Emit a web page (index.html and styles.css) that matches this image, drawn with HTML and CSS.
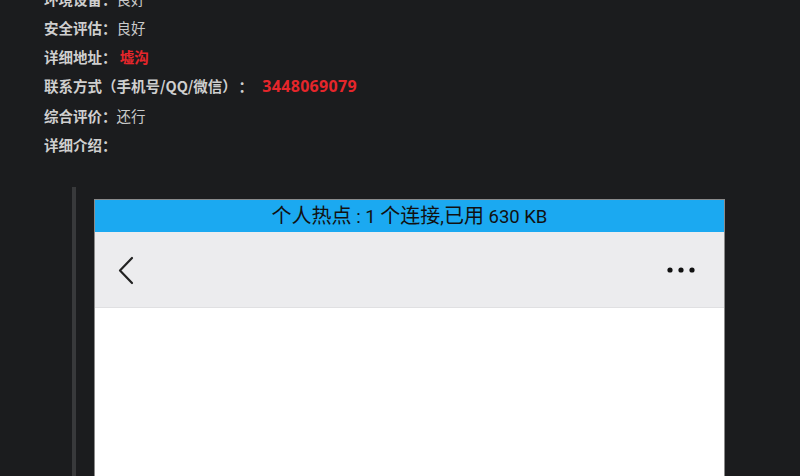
FILE: index.html
```html
<!DOCTYPE html>
<html lang="zh-CN">
<head>
    <meta charset="UTF-8">
    <meta name="viewport" content="width=device-width, initial-scale=1.0">
    <title>详细信息</title>
    <link rel="stylesheet" href="styles.css">
</head>
<body>
    <div class="post">
        <div class="info">
            <p><b>环境设备：</b>良好</p>
            <p><b>安全评估：</b>良好</p>
            <p><b>详细地址：</b> <span class="hot">墟沟</span></p>
            <p><b>联系方式（手机号/QQ/微信）<span class="colon">：</span></b> <span class="hot num">3448069079</span></p>
            <p><b>综合评价：</b>还行</p>
            <p><b>详细介绍：</b></p>
        </div>

        <blockquote class="quote">
            <div class="shot">
                <div class="status">个人热点<span class="lat"> : 1 </span>个连接<span class="lat">,</span>已用<span class="lat"> 630 KB</span></div>
                <div class="nav">
                    <svg class="back" width="18" height="30" viewBox="0 0 18 30">
                        <path d="M15 3 L3 15.5 L15 28" fill="none" stroke="#222" stroke-width="2.2" stroke-linecap="round" stroke-linejoin="round"/>
                    </svg>
                    <svg class="more" width="28" height="8" viewBox="0 0 28 8">
                        <circle cx="3" cy="4" r="2.6" fill="#111"/>
                        <circle cx="14" cy="4" r="2.6" fill="#111"/>
                        <circle cx="25" cy="4" r="2.6" fill="#111"/>
                    </svg>
                </div>
                <div class="page"></div>
            </div>
        </blockquote>
    </div>
</body>
</html>
```

FILE: styles.css
```css
body {
    margin: 0;
    background-color: #1b1c1e;
    font-family: "Noto Sans CJK SC", "Noto Sans", sans-serif;
    color: #c9c9c9;
    overflow: hidden;
}
.post {
    margin-top: -16px;
    padding-left: 44px;
}
.info p {
    margin: 0;
    font-size: 14.5px;
    line-height: 29px;
}
.info b {
    font-weight: bold;
    color: #cfcfcf;
}
.colon {
    margin: 0 6px 0 9px;
}
.hot {
    color: #e5262b;
    font-weight: bold;
}
.num {
    font-family: "Noto Sans", sans-serif;
    font-size: 16px;
    letter-spacing: 0.3px;
}
.quote {
    margin: 28px 0 0 28px;
    padding: 12px 0 0 18px;
    border-left: 4px solid #38393b;
}
.shot {
    width: 629px;
    border: 1px solid #8a8a8a;
    border-bottom: none;
    background: #fff;
}
.status {
    height: 32px;
    background-color: #1ba9f1;
    color: #111;
    font-size: 20px;
    line-height: 30px;
    text-align: center;
}
.status .lat {
    font-family: Roboto, sans-serif;
    font-size: 18.5px;
}
.nav {
    height: 75px;
    background-color: #ececee;
    border-bottom: 1px solid #e0e0e2;
    display: flex;
    align-items: center;
    justify-content: space-between;
    padding: 0 29px 0 22px;
}
.back {
    margin-top: 1px;
}
.more {
    margin-top: 1px;
}
.page {
    height: 240px;
    background: #fff;
}
```
